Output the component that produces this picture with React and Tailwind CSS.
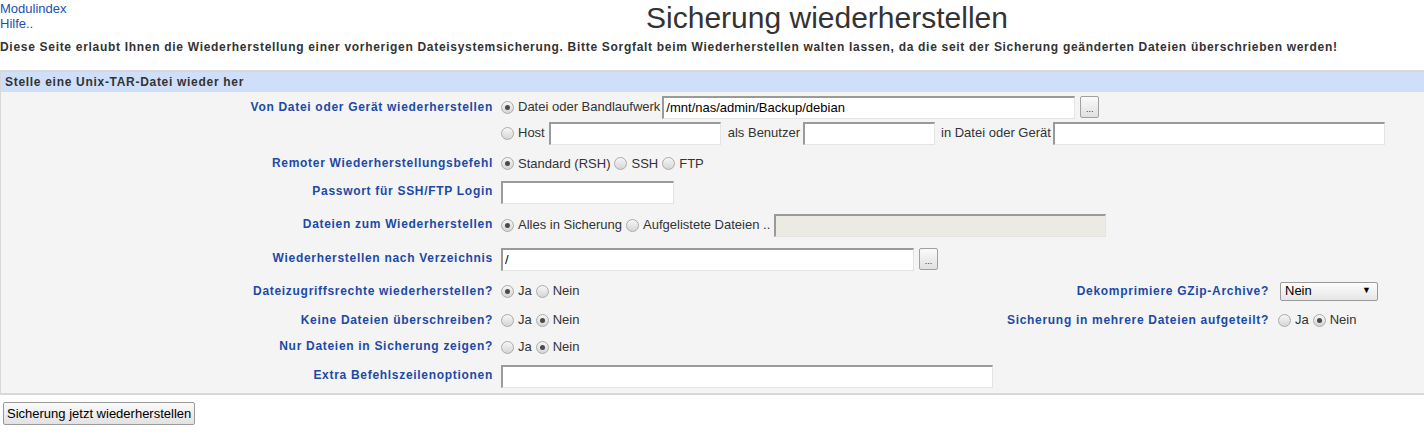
const font = { fontFamily: '"Liberation Sans", Arial, sans-serif' }

function Radio({ checked }) {
  return (
    <span className="inline-flex items-center justify-center w-[13px] h-[13px] rounded-full border border-[#ababab] bg-gradient-to-b from-[#f6f6f6] to-[#d6d6d6] shrink-0">
      {checked && <span className="block w-[5px] h-[5px] rounded-full bg-[#4a4a4a]" />}
    </span>
  )
}

function Opt({ checked, label, className = '' }) {
  return (
    <span className={`inline-flex items-center ${className}`}>
      <Radio checked={checked} />
      <span className="ml-[4px]">{label}</span>
    </span>
  )
}

function Field({ w, value = '', disabled, className = '' }) {
  return (
    <input
      readOnly
      defaultValue={value}
      disabled={disabled}
      className={`h-[23px] px-[2px] text-[13px] text-black border-t-2 border-l-2 border-r border-b border-t-[#9a9a9a] border-l-[#9a9a9a] border-r-[#e4e4e4] border-b-[#e4e4e4] outline-none ${disabled ? 'bg-[#ebebe4]' : 'bg-white'} ${className}`}
      style={{ width: w }}
    />
  )
}

function Dots({ className = '' }) {
  return (
    <span className={`inline-flex items-end justify-center w-[19px] h-[22px] pb-[3px] border border-[#a0a0a0] rounded-[2px] bg-gradient-to-b from-[#fafafa] to-[#e0e0e0] text-[9px] leading-none text-[#333] ${className}`}>
      ...
    </span>
  )
}

function Row({ label, h, className = '', children }) {
  return (
    <div className={`flex items-center ${className}`} style={{ height: h }}>
      <div className="w-[492px] shrink-0 text-right font-bold text-[12px] tracking-[0.7px] text-[#1c4aa6] pb-[2px]">{label}</div>
      <div className="ml-[8px] flex items-center text-[13px] text-[#333]">{children}</div>
    </div>
  )
}

export default function App() {
  return (
    <div className="w-[1424px] h-[435px] bg-white text-[#333]" style={font}>
      <div className="flex">
        <div className="w-[230px] shrink-0 text-[13px] leading-[14px] text-[#1c4fb0] pt-[2px]">
          <div>Modulindex</div>
          <div className="mt-[1px]">Hilfe..</div>
        </div>
        <div className="flex-1 text-center text-[30px] leading-[34px] text-[#333] pt-[1px]">Sicherung wiederherstellen</div>
      </div>
      <p className="mt-[4px] text-[12px] font-bold tracking-[0.7px] leading-[16px] text-[#333]">
        Diese Seite erlaubt Ihnen die Wiederherstellung einer vorherigen Dateisystemsicherung. Bitte Sorgfalt beim Wiederherstellen walten lassen, da die seit der Sicherung geänderten Dateien überschrieben werden!
      </p>

      <div className="mt-[15px] border-t-2 border-b-2 border-l border-[#d8d8d8]">
        <div className="h-[20px] flex items-center bg-[#cfdffa] pl-[4px] text-[12px] font-bold tracking-[0.7px] text-[#333]">
          Stelle eine Unix-TAR-Datei wieder her
        </div>
        <div className="bg-[#f4f4f4] pt-[2px] pb-[3px]">
          <div className="flex">
            <div className="w-[492px] shrink-0 text-right font-bold text-[12px] tracking-[0.7px] text-[#1c4aa6] pt-[4px]">
              Von Datei oder Gerät wiederherstellen
            </div>
            <div className="ml-[8px] text-[13px] text-[#333]">
              <div className="h-[26px] flex items-center">
                <Opt checked label="Datei oder Bandlaufwerk" />
                <Field w={413} value="/mnt/nas/admin/Backup/debian" className="ml-[2px]" />
                <Dots className="ml-[5px]" />
              </div>
              <div className="h-[26px] flex items-center">
                <Opt label="Host" />
                <Field w={172} className="ml-[4px]" />
                <span className="ml-[7px]">als Benutzer</span>
                <Field w={132} className="ml-[3px]" />
                <span className="ml-[6px]">in Datei oder Gerät</span>
                <Field w={332} className="ml-[2px]" />
              </div>
            </div>
          </div>

          <Row label="Remoter Wiederherstellungsbefehl" h={29} className="mt-[3px]">
            <Opt checked label="Standard (RSH)" />
            <Opt label="SSH" className="ml-[4px]" />
            <Opt label="FTP" className="ml-[4px]" />
          </Row>

          <Row label="Passwort für SSH/FTP Login" h={28}>
            <Field w={173} />
          </Row>

          <Row label="Dateien zum Wiederherstellen" h={38}>
            <Opt checked label="Alles in Sicherung" />
            <Opt label="Aufgelistete Dateien .." className="ml-[4px]" />
            <Field w={332} disabled className="ml-[4px]" />
          </Row>

          <Row label="Wiederherstellen nach Verzeichnis" h={30}>
            <Field w={413} value="/" />
            <Dots className="ml-[5px]" />
          </Row>

          <div className="flex items-center h-[34px]">
            <div className="w-[492px] shrink-0 text-right font-bold text-[12px] tracking-[0.7px] text-[#1c4aa6]">Dateizugriffsrechte wiederherstellen?</div>
            <div className="ml-[8px] w-[500px] flex items-center text-[13px]">
              <Opt checked label="Ja" />
              <Opt label="Nein" className="ml-[4px]" />
            </div>
            <div className="w-[268px] text-right font-bold text-[12px] tracking-[0.7px] text-[#1c4aa6]">Dekomprimiere GZip-Archive?</div>
            <div className="ml-[11px] w-[98px] h-[19px] flex items-center justify-between px-[4px] border border-[#9a9a9a] rounded-[2px] bg-gradient-to-b from-[#fdfdfd] to-[#e6e6e6] text-[13px] text-black">
              <span>Nein</span>
              <span className="text-[9px] mr-[2px]">▼</span>
            </div>
          </div>

          <div className="flex items-center h-[24px]">
            <div className="w-[492px] shrink-0 text-right font-bold text-[12px] tracking-[0.7px] text-[#1c4aa6]">Keine Dateien überschreiben?</div>
            <div className="ml-[8px] w-[500px] flex items-center text-[13px]">
              <Opt label="Ja" />
              <Opt checked label="Nein" className="ml-[4px]" />
            </div>
            <div className="w-[268px] text-right font-bold text-[12px] tracking-[0.7px] text-[#1c4aa6]">Sicherung in mehrere Dateien aufgeteilt?</div>
            <div className="ml-[9px] flex items-center text-[13px]">
              <Opt label="Ja" />
              <Opt checked label="Nein" className="ml-[4px]" />
            </div>
          </div>

          <Row label="Nur Dateien in Sicherung zeigen?" h={30}>
            <Opt label="Ja" />
            <Opt checked label="Nein" className="ml-[4px]" />
          </Row>

          <Row label="Extra Befehlszeilenoptionen" h={28}>
            <Field w={492} />
          </Row>
        </div>
      </div>

      <button className="mt-[7px] ml-[3px] h-[23px] px-[3px] border border-[#9a9a9a] rounded-[2px] bg-gradient-to-b from-[#fafafa] to-[#e2e2e2] text-[13px] text-black">
        Sicherung jetzt wiederherstellen
      </button>
    </div>
  )
}
